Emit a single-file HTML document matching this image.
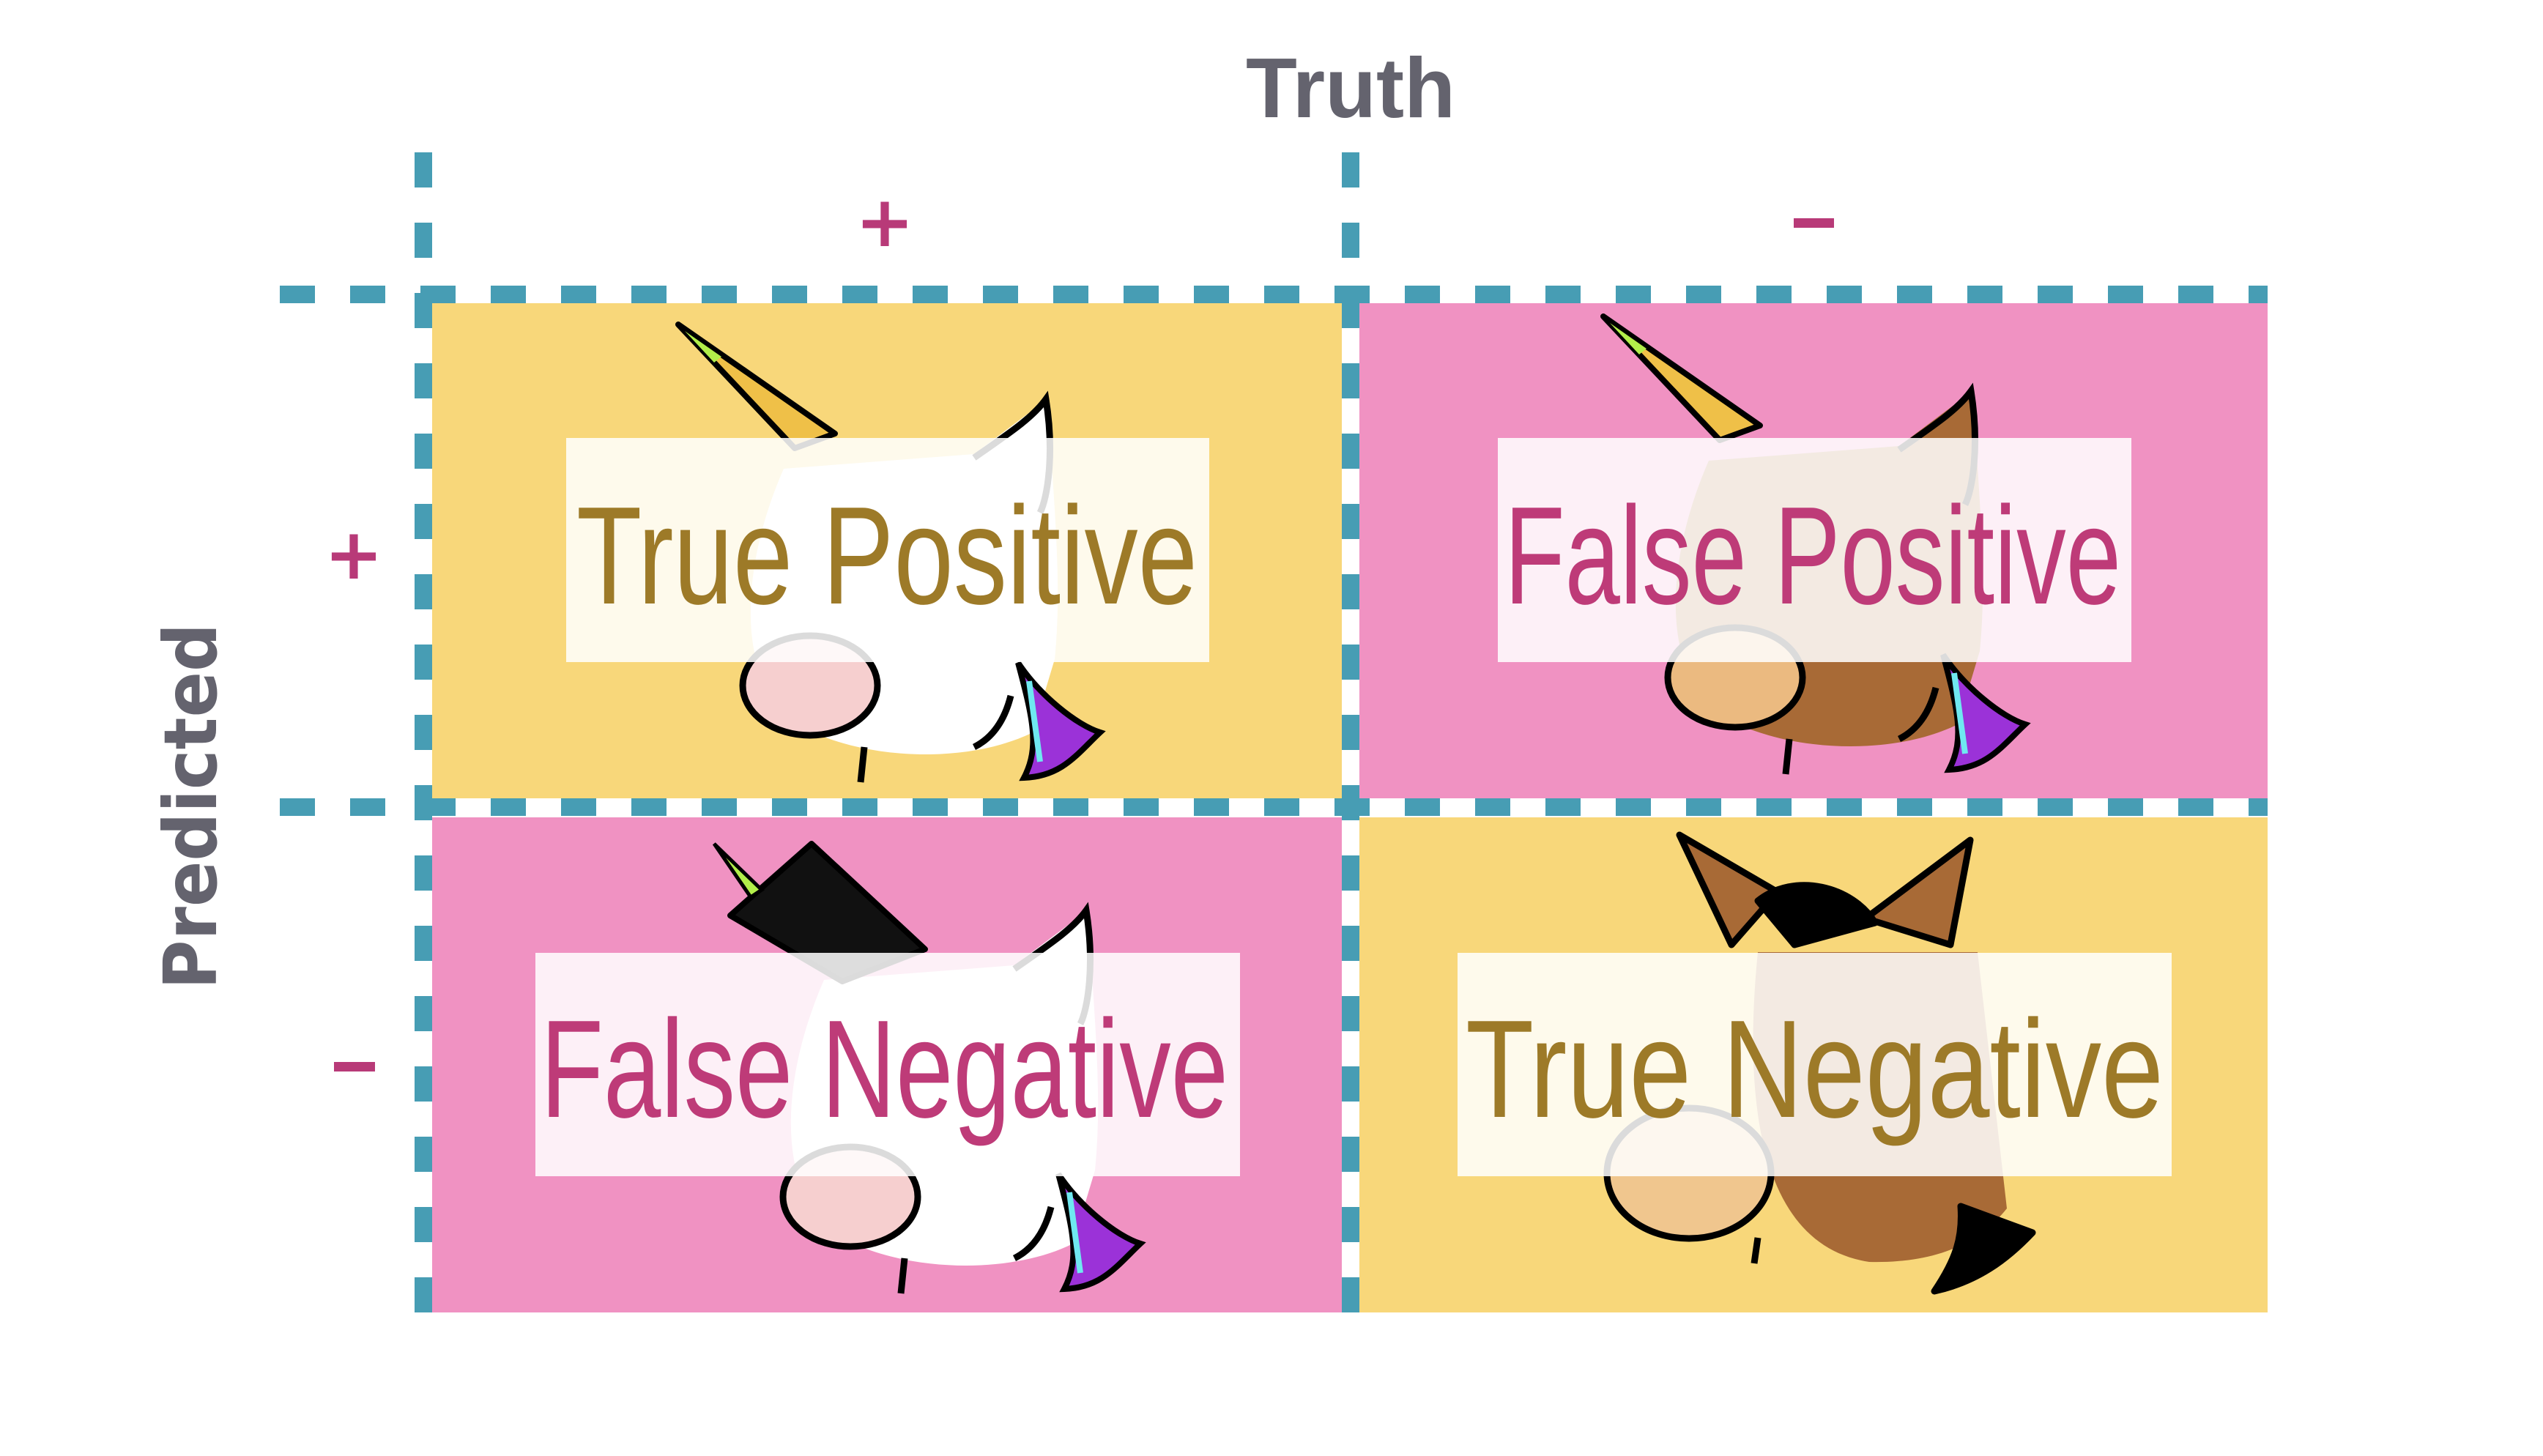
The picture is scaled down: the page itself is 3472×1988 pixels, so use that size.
<!DOCTYPE html>
<html><head><meta charset="utf-8"><style>
html,body{margin:0;padding:0;background:#fff;}
svg{display:block;}
</style></head><body>
<svg width="3472" height="1988" viewBox="0 0 3472 1988" xmlns="http://www.w3.org/2000/svg">
<rect width="3472" height="1988" fill="#fff"/>
<text x="1844" y="160" text-anchor="middle" font-family="Liberation Sans, sans-serif" font-weight="bold" font-size="116" fill="#64636E" textLength="286" lengthAdjust="spacingAndGlyphs">Truth</text>
<text transform="translate(295,1101) rotate(-90)" text-anchor="middle" font-family="DejaVu Sans, Liberation Sans, sans-serif" font-weight="bold" font-size="100" fill="#64636E" textLength="500" lengthAdjust="spacingAndGlyphs">Predicted</text>
<g font-family="DejaVu Sans, Liberation Sans, sans-serif" font-weight="bold" font-size="96" fill="#B83A78" text-anchor="middle">
<text x="1208" y="336">+</text>
<text x="483" y="790">+</text>
</g>
<rect x="2449" y="298" width="55" height="13" fill="#B83A78"/>
<rect x="456" y="1450" width="56" height="13" fill="#B83A78"/>
<g stroke="#479DB4" stroke-width="24" fill="none">
<line x1="578" y1="208" x2="578" y2="1792" stroke-dasharray="48 48"/>
<line x1="1844" y1="208" x2="1844" y2="1792" stroke-dasharray="48 48"/>
<line x1="382" y1="402" x2="3096" y2="402" stroke-dasharray="48 48"/>
<line x1="382" y1="1102" x2="3096" y2="1102" stroke-dasharray="48 48"/>
</g>
<rect x="590" y="414" width="1242" height="676" fill="#F8D77A"/>
<rect x="1856" y="414" width="1240" height="676" fill="#F092C2"/>
<rect x="590" y="1116" width="1242" height="676" fill="#F092C2"/>
<rect x="1856" y="1116" width="1240" height="676" fill="#F8D77A"/>

<defs>
<g id="uni">
<path d="M1070,640 C1000,800 1010,960 1110,1000 C1200,1040 1330,1040 1410,1000 L1440,900 C1450,800 1440,700 1430,545 L1330,620 Z" fill="var(--hf)"/>
<path d="M1330,625 C1380,590 1410,570 1428,545 C1440,620 1430,680 1420,700" fill="var(--hf)" stroke="#000" stroke-width="9"/>
<ellipse cx="1106" cy="936" rx="92" ry="68" fill="var(--sf)" stroke="#000" stroke-width="9"/>
<path d="M1180,1020 L1175,1068" stroke="#000" stroke-width="9"/>
<path d="M1390,905 C1420,950 1470,990 1502,1000 C1470,1030 1450,1060 1398,1062 C1420,1020 1410,980 1390,905 Z" fill="#9B32D8" stroke="#000" stroke-width="8"/>
<path d="M1405,930 L1420,1040" stroke="#6FE8F0" stroke-width="8"/>
<path d="M1380,950 C1370,990 1350,1010 1330,1020" stroke="#000" stroke-width="9" fill="none"/>
</g>
<g id="horn">
<polygon points="926,443 1140,592 1085,612" fill="#EFC048" stroke="#000" stroke-width="8" stroke-linejoin="round"/>
<polygon points="935,452 985,487 975,495" fill="#B2EE4A"/>
</g>
</defs>
<g style="--hf:#fff;--sf:#F6CFCF"><use href="#horn"/><use href="#uni"/></g>
<g transform="translate(1263,-11)" style="--hf:#A86A36;--sf:#EBBA80"><use href="#horn"/><use href="#uni"/></g>
<g transform="translate(55,698)" style="--hf:#fff;--sf:#F6CFCF"><use href="#uni"/></g>
<polygon points="997,1250 1108,1152 1263,1296 1150,1340" fill="#111" stroke="#000" stroke-width="8" stroke-linejoin="round"/>
<polygon points="975,1152 1040,1215 1025,1225" fill="#B2EE4A" stroke="#000" stroke-width="5"/>
<g stroke="#000" stroke-width="9" stroke-linejoin="round">
<path d="M2400,1300 C2380,1500 2400,1700 2552,1723 C2640,1725 2700,1700 2740,1650 L2700,1300 Z" fill="#A86A36" stroke="none"/>
<path d="M2293,1140 L2427,1218 L2364,1290 Z" fill="#A86A36"/>
<path d="M2690,1147 L2663,1290 L2547,1254 Z" fill="#A86A36"/>
<path d="M2400,1230 C2450,1190 2530,1210 2560,1260 L2450,1290 Z" fill="#000"/>
<ellipse cx="2306" cy="1602" rx="112" ry="89" fill="#F0C68E"/>
<path d="M2677,1647 L2775,1683 C2740,1720 2700,1750 2641,1763 C2670,1720 2680,1690 2677,1647 Z" fill="#000"/>
<path d="M2400,1690 L2395,1725" fill="none"/>
</g>
<rect x="773" y="598" width="878" height="306" fill="#FFFFFF" fill-opacity="0.86"/>
<rect x="2045" y="598" width="865" height="306" fill="#FFFFFF" fill-opacity="0.86"/>
<rect x="731" y="1301" width="962" height="305" fill="#FFFFFF" fill-opacity="0.86"/>
<rect x="1990" y="1301" width="975" height="305" fill="#FFFFFF" fill-opacity="0.86"/>
<g font-family="Liberation Sans, sans-serif" font-size="190">
<text x="787" y="824" fill="#9D7A28" textLength="848" lengthAdjust="spacingAndGlyphs">True Positive</text>
<text x="2054" y="824" fill="#BE3B78" textLength="842" lengthAdjust="spacingAndGlyphs">False Positive</text>
<text x="738" y="1525" fill="#BE3B78" textLength="939" lengthAdjust="spacingAndGlyphs">False Negative</text>
<text x="2001" y="1525" fill="#9D7A28" textLength="953" lengthAdjust="spacingAndGlyphs">True Negative</text>
</g>
</svg>
</body></html>
